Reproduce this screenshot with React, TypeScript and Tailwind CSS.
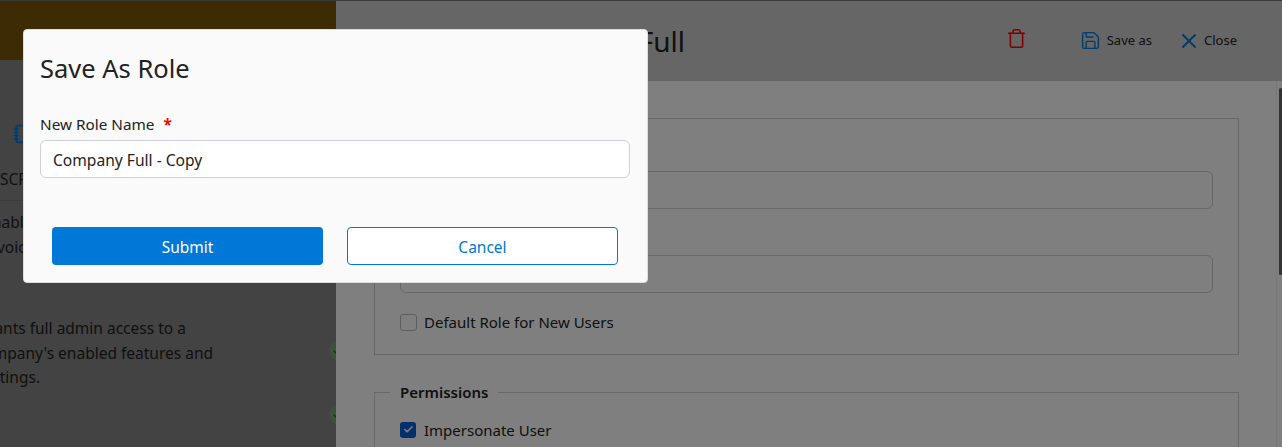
import { Check, Notebook, Save, Trash, X } from "lucide-react";

const font = { fontFamily: '"Noto Sans", sans-serif' };

function Field() {
  return <div className="h-[38px] rounded-md border border-[#cdd0d8] bg-white" />;
}

function StatusDot() {
  return (
    <div className="absolute right-[-11px] flex h-[18px] w-[18px] items-center justify-center rounded-full bg-[#74a874]">
      <Check size={12} strokeWidth={3} className="text-[#2f6b2f]" />
    </div>
  );
}

function LeftPanel() {
  return (
    <div className="flex h-full w-[336px] shrink-0 flex-col overflow-hidden bg-[#868686] text-[15.5px] text-[#222]">
      <div className="h-[60px] shrink-0 bg-[#7b5708]" />
      <Notebook size={20} className="mt-[64px] ml-[13px] shrink-0 text-[#0078d7]" />
      <div className="mt-[16px] flex h-[41px] shrink-0 items-center border-b border-[#777]">SCR</div>
      <div className="shrink-0 pt-[9px] leading-[25px]">
        <div className="ml-[-8px]">nable</div>
        <div className="ml-[-3px]">voice</div>
      </div>
      <div className="relative mt-[56px] shrink-0 leading-[24.5px]">
        <div className="ml-[-23px]">Grants full admin access to a</div>
        <div className="ml-[-24px]">company's enabled features and</div>
        <div className="ml-[-22px]">settings.</div>
        <div className="absolute top-[26px] right-0">
          <StatusDot />
        </div>
        <div className="absolute top-[90px] right-0">
          <StatusDot />
        </div>
      </div>
    </div>
  );
}

function RightPanel() {
  return (
    <div className="flex h-full min-w-0 flex-1 flex-col bg-white text-[15px] text-[#222]">
      <header className="flex h-[81px] shrink-0 items-center justify-between bg-[#cccccc] pr-[45px] pl-[98px]">
        <h1 className="text-[28px] text-[#222]">Role: Company Full</h1>
        <div className="flex items-center text-[13px]">
          <Trash size={21} strokeWidth={1.75} className="mr-[53px] mb-[4px] text-[#ff0000]" />
          <Save size={21} strokeWidth={1.6} className="mr-[6px] text-[#0078d7]" />
          <span className="mr-[25px]">Save as</span>
          <X size={24} strokeWidth={2} className="mr-[3px] text-[#0078d7]" />
          <span>Close</span>
        </div>
      </header>
      <div className="flex min-h-0 flex-1">
        <div className="min-w-0 flex-1 overflow-hidden pl-[38px] pr-[37px] pt-[37px]">
          <div className="h-[237px] border border-[#cdd0d8] px-[25px] pt-[52px]">
            <Field />
            <div className="mt-[46px]">
              <Field />
            </div>
            <label className="mt-[18px] flex items-center gap-[7px]">
              <span className="h-[17px] w-[17px] rounded-[3px] border border-[#bbb] bg-white" />
              Default Role for New Users
            </label>
          </div>
          <fieldset className="mt-[26px] border border-[#cdd0d8] px-[25px] pb-4">
            <legend className="-ml-[10px] px-[10px] text-[15px] font-semibold">Permissions</legend>
            <label className="mt-[15px] flex items-center gap-2">
              <span className="flex h-4 w-4 items-center justify-center rounded-[3px] bg-[#0b5ed7]">
                <Check size={11} strokeWidth={3.5} className="text-white" />
              </span>
              Impersonate User
            </label>
          </fieldset>
        </div>
        <div className="w-[6px] shrink-0 border-l border-[#f0f0f0]" />
      </div>
    </div>
  );
}

export default function App() {
  return (
    <div className="relative flex h-[447px] w-full overflow-hidden" style={font}>
      <LeftPanel />
      <RightPanel />
      <div className="absolute inset-0 bg-black/50" />
      <div className="absolute top-[88px] right-0 h-[187px] w-[3px] rounded-sm bg-[#333]" />
      <div className="absolute inset-x-0 top-0 h-px bg-[#3a3a3a]" />
      <div className="absolute top-[29px] left-[23px] flex h-[254px] w-[625px] flex-col rounded border border-[#ddd] bg-[#fafafa] px-4">
        <h2 className="mt-[20px] text-[25.5px] leading-[36px] font-normal text-[#222]">Save As Role</h2>
        <label className="mt-[28px] flex text-[15.3px] leading-5 text-[#222]">
          New Role Name<span className="ml-[9px] font-bold text-[#ff0000]">*</span>
        </label>
        <input
          readOnly
          value="Company Full - Copy"
          className="mt-[6px] h-[38px] w-[590px] rounded-md border border-[#cdd0d8] bg-white px-3 pt-px text-[15.6px] text-[#222]"
        />
        <div className="mt-[49px] flex gap-6 px-3">
          <button className="h-[38px] w-[271px] rounded bg-[#0078d7] pt-[3px] text-[15.5px] text-white">Submit</button>
          <button className="h-[38px] w-[271px] rounded border border-[#0078d7] bg-white pt-[3px] text-[15.5px] text-[#0078d7]">Cancel</button>
        </div>
      </div>
    </div>
  );
}
